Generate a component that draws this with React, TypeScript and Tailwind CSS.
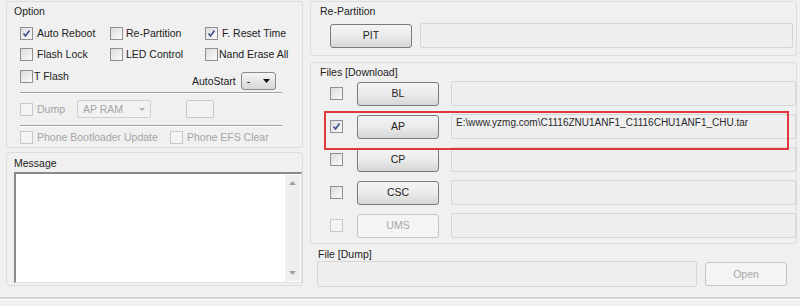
import React from "react";

const font = { fontFamily: '"Liberation Sans", Arial, sans-serif' };

function Check({ checked = false, disabled = false }: { checked?: boolean; disabled?: boolean }) {
  return (
    <span
      className={`relative inline-flex h-[13px] w-[13px] shrink-0 items-center justify-center border ${
        disabled ? "border-[#c9c9c9] bg-[#f4f4f4]" : "border-[#8f8f8f] bg-gradient-to-br from-[#dcdcdc] to-[#fbfbfb]"
      }`}
    >
      {checked && (
        <svg width="9" height="9" viewBox="0 0 9 9">
          <path d="M1.5 4.5 L3.5 7 L7.5 1.5" fill="none" stroke="#3c4f8a" strokeWidth="1.6" />
        </svg>
      )}
    </span>
  );
}

function CheckLabel({
  label,
  checked,
  disabled,
  w,
  gap = "gap-[4px]",
}: {
  label: string;
  checked?: boolean;
  disabled?: boolean;
  w: string;
  gap?: string;
}) {
  return (
    <div className={`flex h-[14px] items-center ${gap} ${w}`}>
      <Check checked={checked} disabled={disabled} />
      <span className={disabled ? "text-[#a5a5a5]" : "text-[#222]"}>{label}</span>
    </div>
  );
}

function Btn({ label, disabled = false, w = "w-[82px]", h = "h-[24px]" }: { label: string; disabled?: boolean; w?: string; h?: string }) {
  return (
    <div
      className={`flex ${w} ${h} shrink-0 items-center justify-center rounded-[3px] border ${
        disabled
          ? "border-[#c4c4c4] bg-[#f4f4f4] text-[#a8a8a8]"
          : "border-[#7a7a7a] bg-gradient-to-b from-[#f4f4f4] via-[#ebebeb] to-[#d6d6d6] text-[#222]"
      }`}
    >
      {label}
    </div>
  );
}

function Field({ w, h = "h-[25px]", children }: { w: string; h?: string; children?: React.ReactNode }) {
  return (
    <div className={`${w} ${h} shrink-0 rounded-[2px] border border-[#d6d6d6] bg-[#efefef] px-[4px] pt-[3px] text-[10px] text-[#2a2a2a]`}>
      {children}
    </div>
  );
}

function Sep() {
  return <div className="mr-[20px] h-[2px] border-t border-[#a0a0a0] border-b-white border-b" />;
}

function FileRow({ label, checked, disabled, path }: { label: string; checked?: boolean; disabled?: boolean; path?: string }) {
  return (
    <div className="flex h-[33px] items-center">
      <div className="ml-[19px] mr-[14px] flex">
        <Check checked={checked} disabled={disabled} />
      </div>
      <Btn label={label} disabled={disabled} />
      <div className="ml-[12px]">
        <Field w="w-[345px]">{path}</Field>
      </div>
    </div>
  );
}

export default function App() {
  return (
    <div className="flex h-[306px] w-[800px] flex-col overflow-hidden bg-[#f0f0f0] text-[10.5px] leading-none" style={font}>
      <div className="flex h-[297px]">
        {/* left column */}
        <div className="flex w-[310px] flex-col pl-[6px] pr-[7px]">
          <div className="mt-[1px] h-[147px] rounded-[3px] border border-[#dcdcdc] pl-[7px] pt-[4px]">
            <div className="h-[12px] text-[#222]">Option</div>
            <div className="pl-[6px]">
              <div className="mt-[8px] flex items-center">
                <CheckLabel label="Auto Reboot" checked w="w-[90px]" />
                <CheckLabel label="Re-Partition" w="w-[95px]" gap="gap-[3px]" />
                <CheckLabel label="F. Reset Time" checked w="w-[90px]" gap="gap-[4px]" />
              </div>
              <div className="mt-[7px] flex items-center">
                <CheckLabel label="Flash Lock" w="w-[90px]" />
                <CheckLabel label="LED Control" w="w-[95px]" gap="gap-[3px]" />
                <CheckLabel label="Nand Erase All" w="w-[90px]" gap="gap-[1px]" />
              </div>
              <div className="mt-[8px] flex h-[21px] items-start">
                <CheckLabel label="T Flash" w="w-[172px]" gap="gap-[1px]" />
                <span className="mr-[5px] mt-[7px] text-[#222]">AutoStart</span>
                <div className="mt-[3px] flex h-[18px] w-[35px] items-center justify-between rounded-[3px] border border-[#8a8a8a] bg-gradient-to-b from-[#f4f4f4] to-[#d8d8d8] pl-[5px] pr-[5px]">
                  <span>-</span>
                  <svg width="7" height="4" viewBox="0 0 7 4">
                    <path d="M0 0 H7 L3.5 4 Z" fill="#111" />
                  </svg>
                </div>
              </div>
              <div className="mt-[2px]">
                <Sep />
              </div>
              <div className="mt-[6px] flex h-[18px] items-center">
                <CheckLabel label="Dump" disabled w="w-[57px]" />
                <div className="flex h-[18px] w-[74px] items-center justify-between rounded-[2px] border border-[#cfcfcf] bg-[#f2f2f2] px-[5px] text-[#a5a5a5]">
                  <span>AP RAM</span>
                  <svg width="6" height="3" viewBox="0 0 6 3">
                    <path d="M0 0 H6 L3 3 Z" fill="#b0b0b0" />
                  </svg>
                </div>
                <div className="ml-[35px] h-[18px] w-[28px] rounded-[2px] border border-[#c8c8c8] bg-[#f2f2f2]" />
              </div>
              <div className="mt-[7px]">
                <Sep />
              </div>
              <div className="mt-[3px] flex items-center">
                <CheckLabel label="Phone Bootloader Update" disabled w="w-[150px]" />
                <CheckLabel label="Phone EFS Clear" disabled w="w-[120px]" />
              </div>
            </div>
          </div>

          <div className="mt-[4px] h-[134px] rounded-[3px] border border-[#dcdcdc] pl-[7px] pt-[5px]">
            <div className="h-[12px] text-[#222]">Message</div>
            <div className="mt-[2px] flex h-[111px] w-[288px] border-l-2 border-t-2 border-r border-b border-l-[#8a8a8a] border-t-[#8a8a8a] border-r-[#e0e0e0] border-b-[#e0e0e0] bg-white">
              <div className="flex-1" />
              <div className="my-[1px] mr-[1px] flex w-[15px] flex-col items-center justify-between bg-[#efefef] py-[6px]">
                <svg width="7" height="4" viewBox="0 0 7 4">
                  <path d="M0 4 H7 L3.5 0 Z" fill="#a0a0a0" />
                </svg>
                <svg width="7" height="4" viewBox="0 0 7 4">
                  <path d="M0 0 H7 L3.5 4 Z" fill="#a0a0a0" />
                </svg>
              </div>
            </div>
          </div>
        </div>

        {/* right column */}
        <div className="flex flex-1 flex-col pr-[3px]">
          <div className="mt-[1px] h-[55px] rounded-[3px] border border-[#dcdcdc] pt-[4px]">
            <div className="ml-[9px] h-[12px] text-[#222]">Re-Partition</div>
            <div className="mt-[5px] flex items-center">
              <div className="ml-[19px]">
                <Btn label="PIT" />
              </div>
              <div className="ml-[8px]">
                <Field w="w-[373px]" />
              </div>
            </div>
          </div>

          <div className="relative mt-[6px] h-[182px] rounded-[3px] border border-[#dcdcdc] pt-[4px]">
            <div className="ml-[9px] h-[12px] text-[#222]">Files [Download]</div>
            <div className="-mt-[2px] flex flex-col">
              <FileRow label="BL" />
              <FileRow label="AP" checked path="E:\www.yzmg.com\C1116ZNU1ANF1_C1116CHU1ANF1_CHU.tar" />
              <FileRow label="CP" />
              <FileRow label="CSC" />
              <FileRow label="UMS" disabled />
            </div>
            <div className="pointer-events-none absolute left-[13px] top-[48px] h-[39px] w-[465px] border-2 border-[#e0363e]" />
          </div>

          <div className="mt-[2px] h-[46px] pt-[3px]">
            <div className="ml-[8px] h-[12px] text-[#222]">File [Dump]</div>
            <div className="flex items-start">
              <div className="ml-[7px]">
                <Field w="w-[380px]" h="h-[26px]" />
              </div>
              <div className="ml-[8px] mt-[1px]">
                <Btn label="Open" disabled h="h-[24px]" />
              </div>
            </div>
          </div>
        </div>
      </div>
      <div className="h-[3px] border-t-2 border-[#d4d4d4] border-b border-b-white" />
    </div>
  );
}
